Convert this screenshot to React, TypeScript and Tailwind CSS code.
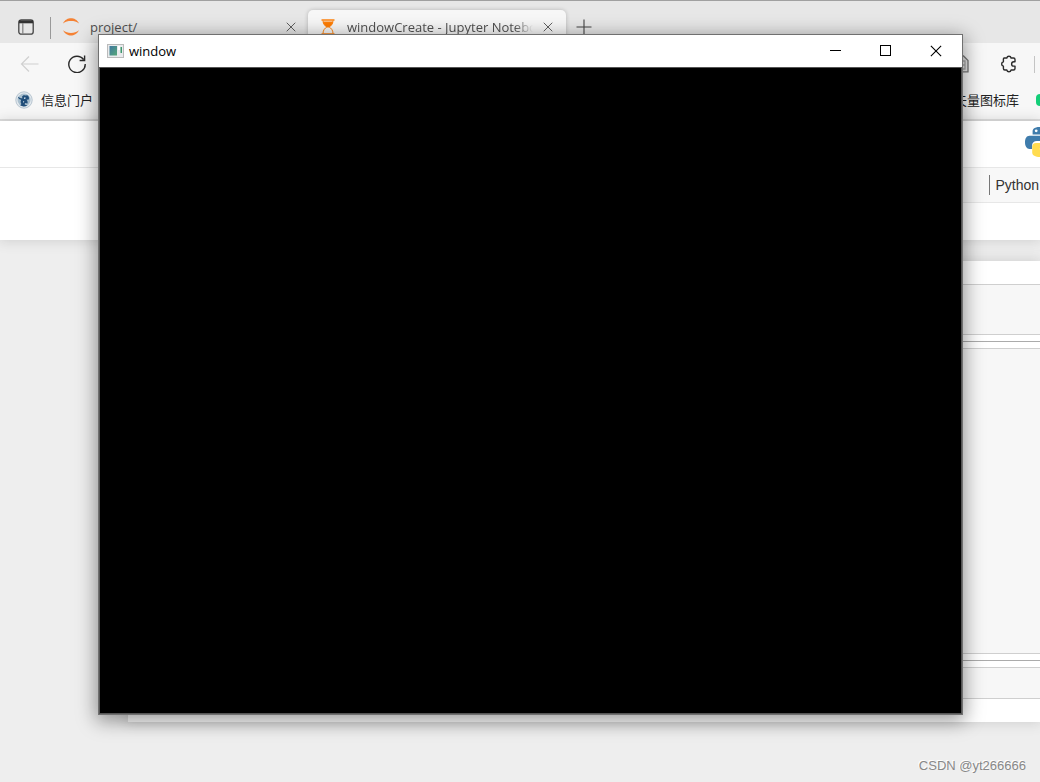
import type { ReactNode } from 'react';

const uiFont = "font-['Open_Sans','Noto_Sans_CJK_SC',sans-serif]";

function CloseGlyph({ className }: { className: string }) {
  return (
    <svg className={className} viewBox="0 0 11 11" fill="none" stroke="currentColor">
      <path d="M.8.8l9.4 9.4M10.2.8L.8 10.2" />
    </svg>
  );
}

function JupyterIcon() {
  return (
    <svg className="h-[18px] w-4 shrink-0" viewBox="1 0 16 18" fill="#f58234">
      <path d="M1 5.5C3 1.600 6 .3 9 .3s6 1.300 8 5.200C14.500 3.500 12 3 9 3S3.500 3.500 1 5.500z" />
      <path d="M1 12.300c2 3.900 5 5.200 8 5.200s6-1.300 8-5.200c-2.500 2-5 2.600-8 2.600s-5.500-.6-8-2.600z" />
    </svg>
  );
}

function HourglassIcon() {
  return (
    <svg className="h-4 w-[14px] shrink-0" viewBox="0 0 14 16" fill="none" stroke="#ff8411">
      <path d="M.5.9h13M.5 15.100h13" strokeWidth="1.500" />
      <path d="M2 1.500C2 5 4 6.800 5.800 8 4 9.200 2 11 2 14.500M12 1.500C12 5 10 6.800 8.200 8 10 9.200 12 11 12 14.500" />
      <path d="M2.300 3h9.400C11 5.800 9.200 7 8 8H6C4.800 7 3 5.800 2.300 3z" fill="#ff7c00" />
    </svg>
  );
}

function PortalIcon() {
  return (
    <svg className="size-[18px] shrink-0" viewBox="0 0 18 18">
      <circle cx="9" cy="9" r="8.200" fill="#e3e9ee" stroke="#b7c5d0" />
      <circle cx="9" cy="9" r="6.500" fill="#a9bfce" />
      <path d="M2.800 5.500c.4 2 1.600 3 3.400 3.300-.8 1.600-.7 3 .2 4.200l-1.200 1.600c2.600 1.200 5.200 1 7.300-.4l-2.700-.5.1-1.700 2.600.4c.4-1.400 0-2.600-1-3.600l2.300-.3c.5-1.900 0-3.400-1.400-4.300l-2.200.3C9 3.700 7.600 4.300 7 5.700l.5 1.600C5.800 7.400 4.200 6.800 2.800 5.500z" fill="#1f4d79" />
      <path d="M9 6.400l1.700.2-.5 1.400-1.300-.2zM8 10l1.300.6-.8 1.400z" fill="#dbe6ee" />
    </svg>
  );
}

function PuzzleIcon() {
  return (
    <svg className="size-[18px]" viewBox="0 0 18 18" fill="none" stroke="#2b2b2b" strokeWidth="1.400" strokeLinejoin="round">
      <path d="M4.300 3h2.500a2.200 2.200 0 0 1 4.300 0h2.400a1.500 1.500 0 0 1 1.500 1.500v2.200h-1.200a2.100 2.100 0 0 0 0 4.400H15v2.400a1.500 1.500 0 0 1-1.500 1.500h-2.400a2.200 2.200 0 0 1-4.300 0H4.900a1.500 1.500 0 0 1-1.500-1.500v-2.400a2.200 2.200 0 0 1 0-4.300V4a1 1 0 0 1 .9-1z" />
    </svg>
  );
}

function PythonLogo() {
  return (
    <svg className="size-8 shrink-0" viewBox="0 0 32 32">
      <path d="M15.800 1C9.500 1 8.600 3.500 8.600 5.500v3h7.600v1.200H5.500C2.500 9.700 1 12.500 1 16.300s1.700 6.700 4.500 6.700h2.600v-3.700c0-2.700 2-4.300 4.700-4.300h7.300c2.200 0 3.700-1.700 3.700-3.800V5.500C23.800 2.500 20.500 1 15.800 1z" fill="#3f7cac" />
      <path d="M16.200 31c6.300 0 7.200-2.500 7.200-4.500v-3h-7.600v-1.200h10.700c3 0 4.500-2.800 4.500-6.600S29.300 9 26.500 9h-2.600v3.700c0 2.700-2 4.300-4.700 4.300h-7.300c-2.200 0-3.700 1.700-3.700 3.800v5.700c0 3 3.300 4.500 8 4.500z" fill="#ffdc50" />
      <circle cx="12.200" cy="4.800" r="1.400" fill="#fff" />
      <circle cx="19.800" cy="27.200" r="1.400" fill="#fff" />
    </svg>
  );
}

function BrowserTabs() {
  return (
    <div className="flex h-[43px] items-end border-t border-[#a0a0a0] bg-[#e7e7e7] text-[#505050]">
      <button aria-label="Tab actions" className="ml-4 flex h-8 w-5 items-center justify-center">
        <svg className="size-4" viewBox="0 0 16 16" fill="none" stroke="#444" strokeWidth="1.300">
          <rect x=".8" y=".8" width="14.400" height="14.400" rx="2.500" />
          <path d="M1 2.800h14" stroke="#333" strokeWidth="3" />
          <path d="M4.800 4v11" stroke="#888" />
        </svg>
      </button>
      <div className="mb-1 ml-[14px] h-[22px] w-px bg-[#999]" />
      <div className="flex h-[33px] w-[257px] items-center pl-3">
        <JupyterIcon />
        <a href="#project" className="ml-[11px] flex-1 text-[13px] leading-5">project/</a>
        <button aria-label="Close project tab" className="mr-3">
          <CloseGlyph className="size-[10px]" />
        </button>
      </div>
      <div className="flex h-[33px] w-[258px] items-center rounded-t-[5px] bg-[#f7f7f7] pl-[13px] shadow-[0_0_4px_rgba(0,0,0,0.22)]">
        <HourglassIcon />
        <a href="#windowCreate" className="ml-3 w-[186px] overflow-hidden text-[13px] leading-5 whitespace-nowrap [mask-image:linear-gradient(to_right,black_90%,transparent)]">
          windowCreate - Jupyter Notebook
        </a>
        <button aria-label="Close windowCreate tab" className="ml-[10px]">
          <CloseGlyph className="size-[10px]" />
        </button>
      </div>
      <button aria-label="New tab" className="ml-[10px] flex h-8 items-center">
        <svg className="size-4" viewBox="0 0 16 16" stroke="#444" strokeWidth="1.100">
          <path d="M8 .5v15M.5 8h15" />
        </svg>
      </button>
    </div>
  );
}

function BrowserToolbar() {
  return (
    <div className="border-b-2 border-[#ddd] bg-[#f7f7f7]">
      <div className="flex h-[42px] items-center">
        <button aria-label="Back" className="ml-5">
          <svg className="size-5" viewBox="0 0 20 20" fill="none" stroke="#d0d0d0" strokeWidth="1.200">
            <path d="M9 2.500L1.500 10 9 17.500M1.500 10h17" />
          </svg>
        </button>
        <button aria-label="Refresh" className="ml-7">
          <svg className="size-[18px]" viewBox="0 0 18 18" fill="none" stroke="#2b2b2b" strokeWidth="1.400">
            <path d="M15.600 4.500A8.200 8.200 0 1 0 17.200 9M16.600.5v5h-5" />
          </svg>
        </button>
        <div className="ml-auto flex items-center">
          <svg className="size-[18px]" viewBox="0 0 18 18" fill="none" stroke="#777" strokeWidth="1.300">
            <path d="M2 1h9.500L16 5.500v11.300H2z" fill="#e8e8e8" />
            <path d="M4 6h9v8H4zM4 10h9" stroke="#aaa" />
          </svg>
          <button aria-label="Extensions" className="ml-[30px]">
            <PuzzleIcon />
          </button>
          <div className="mr-[5px] ml-4 h-[17px] w-px bg-[#c4c4c4]" />
        </div>
      </div>
      <div className="flex h-[34px] items-center pb-1 text-[13px] leading-5 text-[#222]">
        <a href="#portal" className="ml-[15px] flex items-center gap-2">
          <PortalIcon />
          信息门户
        </a>
        <a href="#icons" className="ml-auto">矢量图标库</a>
        <div className="-mr-2 ml-[17px] h-3 w-3 rounded-[4px] bg-[#13ce78]" />
      </div>
    </div>
  );
}

function NotebookHeader() {
  return (
    <header className="bg-white shadow-[0_0_12px_1px_rgba(87,87,87,0.2)]">
      <div className="flex h-[47px] justify-end border-b border-[#e7e7e7]">
        <div className="-mr-4 pt-[5px]">
          <PythonLogo />
        </div>
      </div>
      <div className="ml-[128px] flex h-[35px] items-center justify-end border-b border-[#e7e7e7] bg-[#f8f8f8]">
        <span className="border-l border-[#777] pr-px pl-[5px] font-['Liberation_Sans',Arial,sans-serif] text-sm leading-5 text-[#333]">
          Python
        </span>
      </div>
      <div className="h-[37px]" />
    </header>
  );
}

function Cell({ className }: { className: string }) {
  return <div className={`border-y border-[#cfcfcf] bg-[#f7f7f7] ${className}`} />;
}

function Rule() {
  return <div className="my-[6px] h-px bg-[#ababab]" />;
}

function NotebookBody() {
  return (
    <main className="mt-[21px] ml-[128px] bg-white py-[23px] shadow-[0_0_12px_1px_rgba(87,87,87,0.2)]">
      <Cell className="h-[51px]" />
      <Rule />
      <Cell className="h-[306px]" />
      <Rule />
      <Cell className="h-8" />
    </main>
  );
}

function DesktopWindow({ title, children }: { title: string; children?: ReactNode }) {
  return (
    <section className="absolute top-[34px] right-[77px] left-[98px] border border-[#707070] bg-[#555] shadow-[0_4px_18px_2px_rgba(0,0,0,0.4)]">
      <div className="flex h-8 items-center bg-white pb-px text-black">
        <svg className="ml-2 h-[14px] w-[17px]" viewBox="0 0 17 14">
          <defs>
            <linearGradient id="screen" x1="0" y1="0" x2="1" y2="1">
              <stop offset="0" stopColor="#4077a0" />
              <stop offset="1" stopColor="#55a878" />
            </linearGradient>
          </defs>
          <rect x=".5" y=".5" width="16" height="13" fill="#e9ebed" stroke="#bbb" />
          <rect x="2.500" y="2" width="7.500" height="9.500" fill="url(#screen)" />
          <rect x="11" y="2" width="2" height="4" fill="#fff" />
          <rect x="13.500" y="3" width="1.500" height="6" fill="#3f976f" />
        </svg>
        <h1 className="ml-[5px] text-[13px] leading-5">{title}</h1>
        <div className="mr-5 ml-auto flex items-center gap-[39px]">
          <button aria-label="Minimize">
            <svg className="size-[11px]" viewBox="0 0 11 11" stroke="currentColor">
              <path d="M0 5.500h11" />
            </svg>
          </button>
          <button aria-label="Maximize">
            <svg className="size-[11px]" viewBox="0 0 11 11" fill="none" stroke="currentColor">
              <rect x=".5" y=".5" width="10" height="10" />
            </svg>
          </button>
          <button aria-label="Close">
            <CloseGlyph className="size-[12px]" />
          </button>
        </div>
      </div>
      <div className="mx-px my-px h-[645px] bg-black">{children}</div>
    </section>
  );
}

export default function App() {
  return (
    <div className={`relative min-h-screen overflow-hidden bg-[#eee] ${uiFont}`}>
      <BrowserTabs />
      <BrowserToolbar />
      <NotebookHeader />
      <NotebookBody />
      <DesktopWindow title="window" />
      <p className="mt-[34px] mr-[14px] text-right font-['Liberation_Sans',Arial,sans-serif] text-[13px] leading-5 text-[#888] [text-shadow:-1px_-1px_0_#fff]">
        CSDN @yt266666
      </p>
    </div>
  );
}
